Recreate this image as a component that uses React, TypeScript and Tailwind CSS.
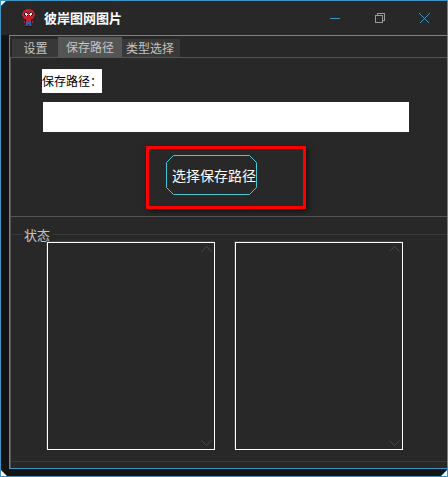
const font = { fontFamily: '"Noto Sans CJK SC", "Liberation Sans", sans-serif' };

// pixel sprite for the window icon
const SPRITE = [
  "....rrrrr....",
  "..rrrrrrrrr..",
  ".rrrrrrrrrrr.",
  ".rrrkrrrkrrr.",
  "rrkwwkrkwwkrr",
  "rrkwwwrwwwkrr",
  "rrrkwkrkwkrrr",
  ".rrrrrrrrrrr.",
  ".rrrrrrrrrrr.",
  "..rrrrrrrrr..",
  "....rrrrr....",
  "...krrrrrk...",
  "..rkbrrrbkr..",
  "..r.bbbbb.r..",
  "....bbbbb....",
  "....bb.bb....",
  "...rrr.rrr...",
  "...kkk.kkk...",
];
const SPRITE_COLORS: Record<string, string> = {
  r: "#c2202e",
  k: "#1c1012",
  w: "#eee4e4",
  b: "#2f62b8",
};

function SpriteIcon() {
  return (
    <svg width="13" height="18" viewBox="0 0 13 18" shapeRendering="crispEdges">
      {SPRITE.flatMap((row, y) =>
        row.split("").map((c, x) =>
          c === "." ? null : <rect key={`${x}-${y}`} x={x} y={y} width="1" height="1" fill={SPRITE_COLORS[c]} />
        )
      )}
    </svg>
  );
}

function WindowButtons() {
  return (
    <div className="flex items-center">
      <svg width="10" height="10" viewBox="0 0 10 10" shapeRendering="crispEdges">
        <rect x="0" y="5" width="10" height="1" fill="#3f94c6" />
      </svg>
      <svg className="ml-[35px]" width="10" height="10" viewBox="0 0 10 10" shapeRendering="crispEdges" fill="none" stroke="#9a9a9a">
        <rect x="0.5" y="2.5" width="7" height="7" />
        <path d="M2.5 2.5V0.5H9.5V7.5H7.5" />
      </svg>
      <svg className="ml-[34px]" width="11" height="11" viewBox="0 0 11 11" shapeRendering="crispEdges" fill="none" stroke="#3f94c6">
        <path d="M0.5 0.5L10.5 10.5M10.5 0.5L0.5 10.5" />
      </svg>
    </div>
  );
}

function Corner({ className, d }: { className: string; d: string }) {
  return (
    <svg className={`absolute ${className}`} width="10" height="10" viewBox="0 0 10 10">
      <path d={d} fill="#ffffff" stroke="#3f94c6" strokeWidth="1" />
    </svg>
  );
}

function ListBox() {
  return (
    <div className="relative h-[208px] w-[168px] border border-white shadow-[-1px_-1px_0_#444444]">
      <svg className="absolute right-[2px] top-[3px]" width="11" height="6" viewBox="0 0 11 6" fill="none" stroke="#484848">
        <path d="M0.5 5.5L5.5 0.5L10.5 5.5" />
      </svg>
      <svg className="absolute bottom-[3px] right-[2px]" width="11" height="6" viewBox="0 0 11 6" fill="none" stroke="#484848">
        <path d="M0.5 0.5L5.5 5.5L10.5 0.5" />
      </svg>
    </div>
  );
}

export default function App() {
  return (
    <div className="relative flex h-[477px] w-[448px] flex-col overflow-hidden border border-[#3f94c6] bg-[#141414]" style={font}>
      {/* Title bar */}
      <div className="flex h-[34px] shrink-0 items-center bg-[#282828] pl-[21px] pr-[17px]">
        <SpriteIcon />
        <span className="ml-[9px] pb-px text-[13px] font-bold leading-none text-white">彼岸图网图片</span>
        <div className="ml-auto">
          <WindowButtons />
        </div>
      </div>

      <div className="ml-[8px] flex min-h-0 flex-1 flex-col border-l border-t border-[#3f94c6] bg-[#282828]">
        {/* Tabs */}
        <div className="flex h-[22px] shrink-0 items-end border-b border-[#555555] pl-[2px] text-[12px] leading-none text-[#c4c4c4]">
          <div className="flex h-[18px] w-[46px] items-center justify-center bg-[#383838] pl-px">设置</div>
          <div className="flex h-[20px] w-[64px] items-center justify-center bg-[#555555]">保存路径</div>
          <div className="flex h-[18px] w-[58px] items-center justify-center bg-[#383838] pr-[2px]">类型选择</div>
        </div>

        <div className="flex min-h-0 flex-1 flex-col border-l border-[#555555]">
          {/* Save path */}
          <div className="h-[159px] shrink-0 border-b border-[#555555] pl-[31px] pt-[11px]">
            <div className="flex h-[24px] w-[60px] items-center whitespace-nowrap bg-white text-[12px] leading-none text-black">保存路径：</div>
            <div className="ml-px mt-[9px] h-[30px] w-[366px] bg-white" />
            <div className="ml-[104px] mt-[14px] flex h-[63px] w-[160px] border-[3px] border-[#ff0000] pl-[17px] pt-[6px] shadow-[2px_2px_6px_rgba(0,0,0,0.6)]">
              <button type="button" className="relative flex h-[40px] w-[91px] items-center justify-center pl-[5px] text-[14px] leading-none text-white">
                <svg className="absolute inset-0" width="91" height="40" viewBox="0 0 91 40" fill="none" stroke="#4cc6d6">
                  <path d="M7.5 0.5H83.5L90.5 7.5V32.5L83.5 39.5H7.5L0.5 32.5V7.5Z" />
                </svg>
                <span className="relative">选择保存路径</span>
              </button>
            </div>
          </div>

          {/* Status group */}
          <div className="flex min-h-0 flex-1 flex-col border-b border-[#3a3a3a]">
            <div className="mt-[10px] flex h-[15px] shrink-0 items-center text-[13px] leading-none text-[#c4c4c4]">
              <div className="ml-px h-px w-[11px] bg-[#3a3a3a]" />
              <span className="mx-[1px]">状态</span>
              <div className="ml-[2px] h-px flex-1 bg-[#3a3a3a]" />
            </div>
            <div className="ml-[36px] flex gap-[20px]">
              <ListBox />
              <ListBox />
            </div>
          </div>
          <div className="h-[6px] shrink-0" />
        </div>
      </div>

      {/* Bottom frame strip */}
      <div className="ml-[8px] h-[8px] shrink-0 border-t border-[#3f94c6]" />

      <Corner className="-left-px -top-px" d="M0 0H7L0 7Z" />
      <Corner className="-bottom-px -left-px" d="M0 10H8L0 2Z" />
      <Corner className="-bottom-px -right-px" d="M10 10H2L10 2Z" />
    </div>
  );
}
